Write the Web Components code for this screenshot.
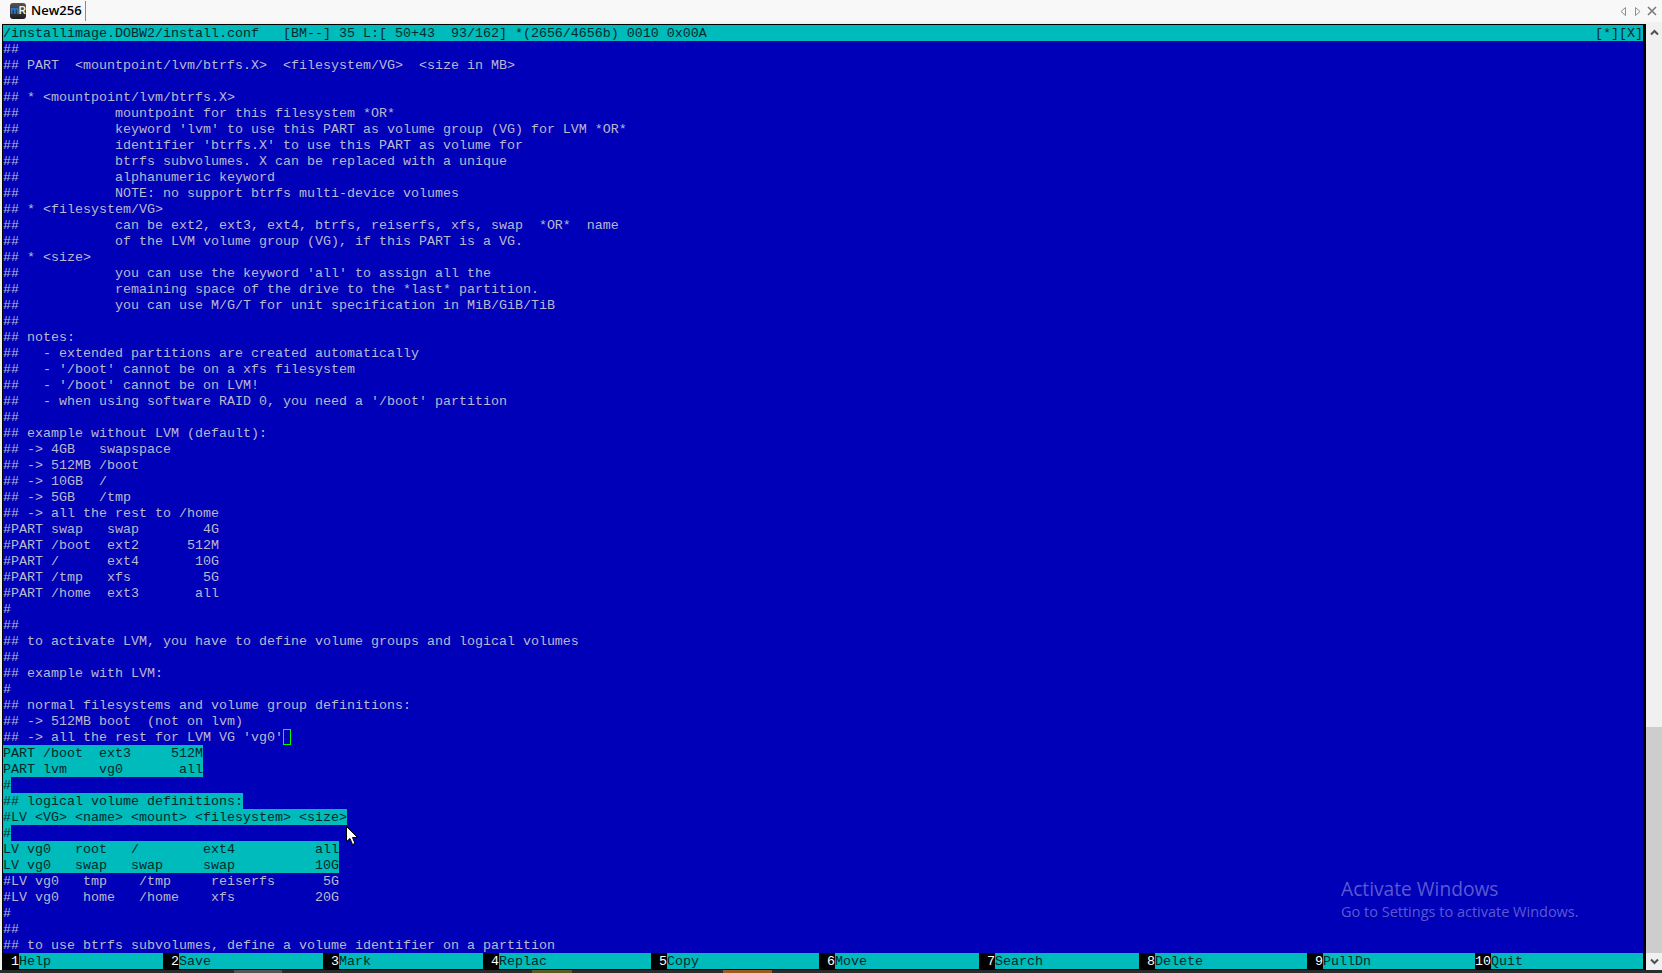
<!DOCTYPE html>
<html>
<head>
<meta charset="utf-8">
<title>New256</title>
<style>
	html, body { margin: 0; padding: 0; background: #f0f0f0; overflow: hidden; }
</style>
</head>
<body>
<app-window>
	<title-bar slot="title" label="New256"></title-bar>
	<term-status slot="status"
		left="/installimage.DOBW2/install.conf   [BM--] 35 L:[ 50+43  93/162] *(2656/4656b) 0010 0x00A"
		right="[*][X]"></term-status>
	<term-screen slot="screen"></term-screen>
	<fkey-bar slot="keys">
		<f-key n="1">Help</f-key>
		<f-key n="2">Save</f-key>
		<f-key n="3">Mark</f-key>
		<f-key n="4">Replac</f-key>
		<f-key n="5">Copy</f-key>
		<f-key n="6">Move</f-key>
		<f-key n="7">Search</f-key>
		<f-key n="8">Delete</f-key>
		<f-key n="9">PullDn</f-key>
		<f-key n="10">Quit</f-key>
	</fkey-bar>
	<v-scrollbar slot="scroll"></v-scrollbar>
	<task-strip slot="task"></task-strip>
	<activate-mark slot="overlay"></activate-mark>
	<mouse-pointer slot="overlay"></mouse-pointer>
</app-window>

<script>
const MONO = `"Liberation Mono", "DejaVu Sans Mono", monospace`;
const BLUE = "#0000b8";
const CYAN = "#00bbbb";
const INK = "#032a2a";

// s: selected (cyan) line, c: cursor after the text
const LINES = [
	"##",
	"## PART  <mountpoint/lvm/btrfs.X>  <filesystem/VG>  <size in MB>",
	"##",
	"## * <mountpoint/lvm/btrfs.X>",
	"##            mountpoint for this filesystem *OR*",
	"##            keyword 'lvm' to use this PART as volume group (VG) for LVM *OR*",
	"##            identifier 'btrfs.X' to use this PART as volume for",
	"##            btrfs subvolumes. X can be replaced with a unique",
	"##            alphanumeric keyword",
	"##            NOTE: no support btrfs multi-device volumes",
	"## * <filesystem/VG>",
	"##            can be ext2, ext3, ext4, btrfs, reiserfs, xfs, swap  *OR*  name",
	"##            of the LVM volume group (VG), if this PART is a VG.",
	"## * <size>",
	"##            you can use the keyword 'all' to assign all the",
	"##            remaining space of the drive to the *last* partition.",
	"##            you can use M/G/T for unit specification in MiB/GiB/TiB",
	"##",
	"## notes:",
	"##   - extended partitions are created automatically",
	"##   - '/boot' cannot be on a xfs filesystem",
	"##   - '/boot' cannot be on LVM!",
	"##   - when using software RAID 0, you need a '/boot' partition",
	"##",
	"## example without LVM (default):",
	"## -> 4GB   swapspace",
	"## -> 512MB /boot",
	"## -> 10GB  /",
	"## -> 5GB   /tmp",
	"## -> all the rest to /home",
	"#PART swap   swap        4G",
	"#PART /boot  ext2      512M",
	"#PART /      ext4       10G",
	"#PART /tmp   xfs         5G",
	"#PART /home  ext3       all",
	"#",
	"##",
	"## to activate LVM, you have to define volume groups and logical volumes",
	"##",
	"## example with LVM:",
	"#",
	"## normal filesystems and volume group definitions:",
	"## -> 512MB boot  (not on lvm)",
	{ t: "## -> all the rest for LVM VG 'vg0'", c: true },
	{ t: "PART /boot  ext3     512M", s: true },
	{ t: "PART lvm    vg0       all", s: true },
	{ t: "#", s: true },
	{ t: "## logical volume definitions:", s: true },
	{ t: "#LV <VG> <name> <mount> <filesystem> <size>", s: true },
	{ t: "#", s: true },
	{ t: "LV vg0   root   /        ext4          all", s: true },
	{ t: "LV vg0   swap   swap     swap          10G", s: true },
	"#LV vg0   tmp    /tmp     reiserfs      5G",
	"#LV vg0   home   /home    xfs          20G",
	"#",
	"##",
	"## to use btrfs subvolumes, define a volume identifier on a partition"
];

class AppWindow extends HTMLElement
{
	constructor()
	{
		super();
		this.attachShadow({ mode: "open" });
		this.shadowRoot.innerHTML = `
			<style>
				:host { display: flex; flex-direction: column; width: 1662px; height: 973px; position: relative; overflow: hidden; }
				.main { display: flex; height: 946px; flex: none; }
				.edge { width: 2px; background: #f0f0f0; }
				.term { width: 1644px; box-sizing: border-box; background: #000; padding: 1px 3px 1px 1px; display: flex; flex-direction: column; }
			</style>
			<slot name="title"></slot>
			<div class="main">
				<div class="edge"></div>
				<div class="term">
					<slot name="status"></slot>
					<slot name="screen"></slot>
					<slot name="keys"></slot>
				</div>
				<slot name="scroll"></slot>
			</div>
			<slot name="task"></slot>
			<slot name="overlay"></slot>
		`;
	}
}

class TitleBar extends HTMLElement
{
	constructor()
	{
		super();
		this.attachShadow({ mode: "open" });
		this.shadowRoot.innerHTML = `
			<style>
				:host { display: flex; align-items: center; height: 24px; flex: none; box-sizing: border-box; padding: 0 5px 0 10px; background: #f8f8f8; border-bottom: 2px solid #f0f0f0; font: 600 13px "Open Sans", sans-serif; color: #000; }
				.icon { width: 16px; height: 16px; border-radius: 3px; background: linear-gradient(#555, #1c1c1c); display: flex; align-items: center; justify-content: center; font: 700 10px/16px "Liberation Sans", sans-serif; letter-spacing: -0.5px; color: #eee; margin-right: 5px; }
				.icon b { color: #2a7fe0; font-weight: 700; }
				.name { padding-right: 3px; border-right: 1px solid #8a8a8a; height: 20px; line-height: 19px; }
				.nav { margin-left: auto; display: flex; gap: 5px; align-items: center; }
				svg { display: block; }
			</style>
			<span class="icon"><b>m</b>R</span>
			<span class="name">${this.getAttribute("label")}</span>
			<span class="nav">
				<svg width="9" height="11" viewBox="0 0 9 11"><path d="M6.5 1.5 L2 5.5 L6.5 9.5 Z" fill="none" stroke="#8f8f8f"/></svg>
				<svg width="9" height="11" viewBox="0 0 9 11"><path d="M2.5 1.5 L7 5.5 L2.5 9.5 Z" fill="none" stroke="#8f8f8f"/></svg>
				<svg width="10" height="10" viewBox="0 0 10 10"><path d="M1 1 L9 9 M9 1 L1 9" stroke="#7a7a7a" stroke-width="1.6"/></svg>
			</span>
		`;
	}
}

class TermStatus extends HTMLElement
{
	constructor()
	{
		super();
		this.attachShadow({ mode: "open" });
		this.shadowRoot.innerHTML = `
			<style>
				:host { display: flex; justify-content: space-between; height: 16px; background: ${CYAN}; color: ${INK}; font: 13.333px/18px ${MONO}; flex: none; }
				span { white-space: pre; height: 16px; }
			</style>
			<span>${this.getAttribute("left")}</span>
			<span>${this.getAttribute("right")}</span>
		`;
	}
}

class TermScreen extends HTMLElement
{
	constructor()
	{
		super();
		this.attachShadow({ mode: "open" });
		const style = `
			<style>
				:host { display: block; height: 912px; flex: none; background: ${BLUE}; color: #b9b9d2; font: 13.333px/18px ${MONO}; overflow: hidden; }
				.line { height: 16px; display: flex; white-space: pre; }
				.sel { background: ${CYAN}; color: ${INK}; }
				.cursor { width: 6px; height: 14px; margin: 0; border: 1px solid #00ff00; }
			</style>
		`;
		const rows = LINES.map(l =>
		{
			const row = typeof l === "string" ? { t: l } : l;
			const text = row.t.replace(/</g, "&lt;");
			return `<div class="line"><span class="${row.s ? "sel" : ""}">${text}</span>${row.c ? `<span class="cursor"></span>` : ""}</div>`;
		});
		this.shadowRoot.innerHTML = style + rows.join("");
	}
}

class FkeyBar extends HTMLElement
{
	constructor()
	{
		super();
		this.attachShadow({ mode: "open" });
		this.shadowRoot.innerHTML = `
			<style>
				:host { display: grid; grid-template-columns: 160px 160px 160px 168px 168px 160px 160px 168px 168px 168px; height: 16px; flex: none; }
			</style>
			<slot></slot>
		`;
	}
}

class FKey extends HTMLElement
{
	constructor()
	{
		super();
		this.attachShadow({ mode: "open" });
		this.shadowRoot.innerHTML = `
			<style>
				:host { display: flex; height: 16px; font: 13.333px/18px ${MONO}; background: ${CYAN}; color: ${INK}; }
				.n { width: 16px; height: 16px; background: #000; color: #fff; text-align: right; flex: none; }
			</style>
			<span class="n">${this.getAttribute("n")}</span><slot></slot>
		`;
	}
}

class VScrollbar extends HTMLElement
{
	constructor()
	{
		super();
		this.attachShadow({ mode: "open" });
		this.shadowRoot.innerHTML = `
			<style>
				:host { display: flex; flex-direction: column; width: 16px; background: #f0f0f0; flex: none; }
				.btn { height: 17px; display: flex; align-items: center; justify-content: center; flex: none; }
				.track { flex: 1; display: flex; flex-direction: column; justify-content: flex-end; }
				.thumb { height: 226px; background: #cdcdcd; }
			</style>
			<div class="btn"><svg width="9" height="7" viewBox="0 0 9 7"><path d="M1 5.5 L4.5 2 L8 5.5" fill="none" stroke="#505050" stroke-width="2"/></svg></div>
			<div class="track"><div class="thumb"></div></div>
			<div class="btn"><svg width="9" height="7" viewBox="0 0 9 7"><path d="M1 1.5 L4.5 5 L8 1.5" fill="none" stroke="#505050" stroke-width="2"/></svg></div>
		`;
	}
}

class TaskStrip extends HTMLElement
{
	constructor()
	{
		super();
		this.attachShadow({ mode: "open" });
		this.shadowRoot.innerHTML = `
			<style>
				:host { display: flex; height: 3px; background: #2b2b2b; flex: none; }
				i { display: block; height: 3px; }
				.a { margin-left: 234px; width: 48px; background: #555; }
				.b { margin-left: 250px; width: 40px; background: #5c5a24; }
				.c { margin-left: 151px; width: 49px; background: #9a5a22; }
			</style>
			<i class="a"></i><i class="b"></i><i class="c"></i>
		`;
	}
}

class ActivateMark extends HTMLElement
{
	constructor()
	{
		super();
		this.attachShadow({ mode: "open" });
		this.shadowRoot.innerHTML = `
			<style>
				:host { position: absolute; left: 1341px; top: 876px; color: rgba(255,255,255,.36); font-family: "Open Sans", sans-serif; white-space: nowrap; }
				.big { font-size: 19.2px; line-height: 26px; }
				.small { font-size: 14.5px; line-height: 20px; }
			</style>
			<div class="big">Activate Windows</div>
			<div class="small">Go to Settings to activate Windows.</div>
		`;
	}
}

class MousePointer extends HTMLElement
{
	constructor()
	{
		super();
		this.attachShadow({ mode: "open" });
		this.shadowRoot.innerHTML = `
			<style>
				:host { position: absolute; left: 346px; top: 826px; width: 13px; height: 20px; }
				svg { display: block; }
			</style>
			<svg width="13" height="20" viewBox="0 0 13 20"><path d="M0.5 0.5 L0.5 15.5 L4 12.5 L6.5 18.5 L9 17.5 L6.5 11.5 L11.5 11.5 Z" fill="#fff" stroke="#000"/></svg>
		`;
	}
}

customElements.define("app-window", AppWindow);
customElements.define("title-bar", TitleBar);
customElements.define("term-status", TermStatus);
customElements.define("term-screen", TermScreen);
customElements.define("fkey-bar", FkeyBar);
customElements.define("f-key", FKey);
customElements.define("v-scrollbar", VScrollbar);
customElements.define("task-strip", TaskStrip);
customElements.define("activate-mark", ActivateMark);
customElements.define("mouse-pointer", MousePointer);
</script>
</body>
</html>
